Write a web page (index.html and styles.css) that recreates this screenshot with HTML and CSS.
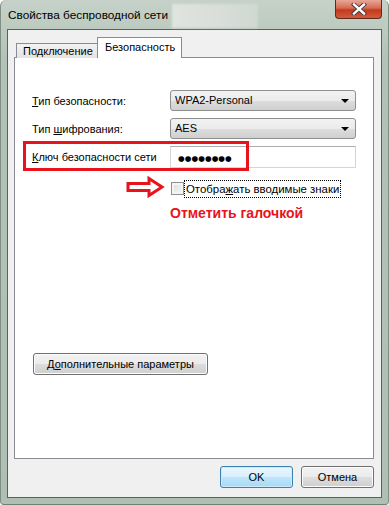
FILE: index.html
```html
<!DOCTYPE html>
<html lang="ru">
<head>
  <meta charset="UTF-8" />
  <title>Свойства беспроводной сети</title>
  <link rel="stylesheet" href="styles.css">
</head>
<body>

<div class="window">
  <div class="titlebar">
    <span class="title">Свойства беспроводной сети</span>
    <span class="blur"></span>
    <div class="close">
      <svg width="20" height="12" viewBox="0 0 20 12">
        <path d="M5 1.5 L15 10.5 M15 1.5 L5 10.5" stroke="#3a3a3a" stroke-width="4.2" stroke-linecap="square"/>
        <path d="M5 1.5 L15 10.5 M15 1.5 L5 10.5" stroke="#fff" stroke-width="2.4" stroke-linecap="square"/>
      </svg>
    </div>
  </div>

  <div class="client">
    <div class="tabs">
      <div class="tab">Подключение</div>
      <div class="tab active">Безопасность</div>
    </div>

    <div class="panel">
      <div class="row">
        <span class="label"><u>Т</u>ип безопасности:</span>
        <div class="combo">WPA2-Personal<span class="arrow"></span></div>
      </div>
      <div class="row">
        <span class="label">Тип <u>ш</u>ифрования:</span>
        <div class="combo">AES<span class="arrow"></span></div>
      </div>
      <div class="row row-key">
        <span class="label"><u>К</u>люч безопасности сети</span>
        <div class="field"><span class="dots">●●●●●●●●</span></div>
      </div>
      <div class="check-row">
        <span class="checkbox"></span>
        <span class="check-label">Отобра<u>ж</u>ать вводимые знаки</span>
      </div>
      <div class="hint">Отметить галочкой</div>

      <button class="btn advanced">Д<u>о</u>полнительные параметры</button>

      <div class="mark"></div>
      <svg class="arrow-mark" width="40" height="22" viewBox="0 0 40 22">
        <path d="M2 7.5 H23 V2.5 L36 11 L23 19.5 V14.5 H2 Z" fill="none" stroke="#e8141c" stroke-width="3"/>
      </svg>
    </div>

    <div class="footer">
      <button class="btn ok">OK</button>
      <button class="btn">Отмена</button>
    </div>
  </div>
</div>

</body>
</html>
```

FILE: styles.css
```css
body {
  margin: 0;
  background-color: #fff;
  font-family: 'Liberation Sans', Arial, sans-serif;
  font-size: 11px;
  color: #000;
}
.window {
  width: 389px;
  height: 505px;
  box-sizing: border-box;
  background: linear-gradient(#c6d2c9, #b2c2b6 60px, #afbfb3);
  border-left: 1px solid #7f8f84;
  border-right: 1px solid #7f8f84;
  border-bottom: 1px solid #6f7f74;
  border-radius: 6px 6px 4px 4px;
  display: flex;
  flex-direction: column;
  white-space: nowrap;
}
.titlebar {
  height: 29px;
  display: flex;
  align-items: flex-start;
  position: relative;
}
.title {
  margin: 7px 0 0 7px;
  font-size: 11.8px;
  line-height: 16px;
  color: #000;
}
.blur {
  width: 86px;
  height: 24px;
  margin: 4px 0 0 4px;
  background: linear-gradient(90deg, #dfe4e0, #d8ddd9 60%, #cfd8d1);
  filter: blur(1px);
}
.close {
  position: absolute;
  top: 0;
  right: 6px;
  width: 47px;
  height: 19px;
  box-sizing: border-box;
  border: 1px solid #5f2a20;
  border-top: none;
  border-radius: 0 0 4px 4px;
  background: linear-gradient(#e8a898, #d66a52 45%, #c23a1e 55%, #d55a3a);
  display: flex;
  align-items: center;
  justify-content: center;
}
.client {
  flex: 1;
  margin: 0 6px 6px 6px;
  background-color: #f0f0f0;
  border: 1px solid #55635a;
  display: flex;
  flex-direction: column;
  padding: 7px 7px 0 6px;
}
.tabs {
  display: flex;
  align-items: flex-end;
  padding-left: 2px;
  height: 21px;
  position: relative;
  z-index: 1;
  margin-bottom: -1px;
}
.tab {
  box-sizing: border-box;
  width: 82px;
  height: 15px;
  padding-left: 6px;
  line-height: 15px;
  border: 1px solid #898c95;
  border-bottom: none;
  background: linear-gradient(#f2f2f2, #e3e3e3);
  color: #000;
}
.tab.active {
  width: 85px;
  height: 21px;
  margin-left: -1px;
  padding-left: 7px;
  background: #fff;
  line-height: 19px;
}
.panel {
  position: relative;
  height: 402px;
  box-sizing: border-box;
  background-color: #fff;
  border: 1px solid #898c95;
  padding: 32px 17px 0 17px;
}
.row {
  display: flex;
  align-items: center;
  margin-bottom: 7px;
}
.row-key {
  margin-bottom: 12px;
}
.label {
  width: 138px;
  flex-shrink: 0;
}
.combo {
  flex: 1;
  height: 21px;
  box-sizing: border-box;
  border: 1px solid #8e8f8f;
  border-radius: 3px;
  background: linear-gradient(#f2f2f2, #ebebeb 50%, #dddddd 51%, #cfcfcf);
  padding-left: 4px;
  line-height: 19px;
  position: relative;
}
.arrow {
  position: absolute;
  right: 6px;
  top: 8px;
  width: 0;
  height: 0;
  border-left: 4px solid transparent;
  border-right: 4px solid transparent;
  border-top: 4px solid #000;
}
.field {
  flex: 1;
  height: 22px;
  box-sizing: border-box;
  border: 1px solid #d5d5d5;
  border-top-color: #abadb3;
  background: #fff;
  padding-left: 7px;
  line-height: 20px;
}
.dots {
  font-family: 'DejaVu Sans', sans-serif;
  font-size: 7.6px;
  letter-spacing: 0.1px;
}
.check-row {
  display: flex;
  align-items: center;
  margin-left: 139px;
  height: 17px;
}
.checkbox {
  width: 13px;
  height: 13px;
  box-sizing: border-box;
  border: 1px solid #8f8f8f;
  background: linear-gradient(135deg, #dcdcdc, #f8f8f8);
  box-shadow: inset 0 0 0 2px #f4f4f4;
  margin-right: 1px;
}
.check-label {
  outline: 1px dotted #000;
  padding: 0 1px;
  line-height: 16px;
  font-size: 11.4px;
}
.hint {
  margin: 9px 0 0 138px;
  color: #e8141c;
  font-weight: bold;
  font-size: 14px;
  line-height: 15px;
}
.btn {
  font-family: 'Liberation Sans', Arial, sans-serif;
  font-size: 11px;
  height: 22px;
  box-sizing: border-box;
  border: 1px solid #707070;
  border-radius: 3px;
  background: linear-gradient(#f2f2f2, #ebebeb 50%, #dddddd 51%, #cfcfcf);
  box-shadow: inset 0 0 0 1px #fcfcfc;
  color: #000;
  padding: 0;
}
.advanced {
  display: block;
  margin: 132px 0 0 1px;
  width: 175px;
}
.mark {
  position: absolute;
  left: 8px;
  top: 83px;
  width: 226px;
  height: 30px;
  box-sizing: border-box;
  border: 3px solid #e8141c;
}
.arrow-mark {
  position: absolute;
  left: 111px;
  top: 118px;
}
.footer {
  display: flex;
  justify-content: flex-end;
  gap: 8px;
  padding: 7px 0 0 0;
}
.footer .btn {
  width: 73px;
}
.ok {
  border-color: #3c7fb1;
  background: linear-gradient(#eaf6fd, #d9f0fc 50%, #bee6fd 51%, #a7d9f5);
  box-shadow: inset 0 0 0 1px #d0eaf9;
}
```
